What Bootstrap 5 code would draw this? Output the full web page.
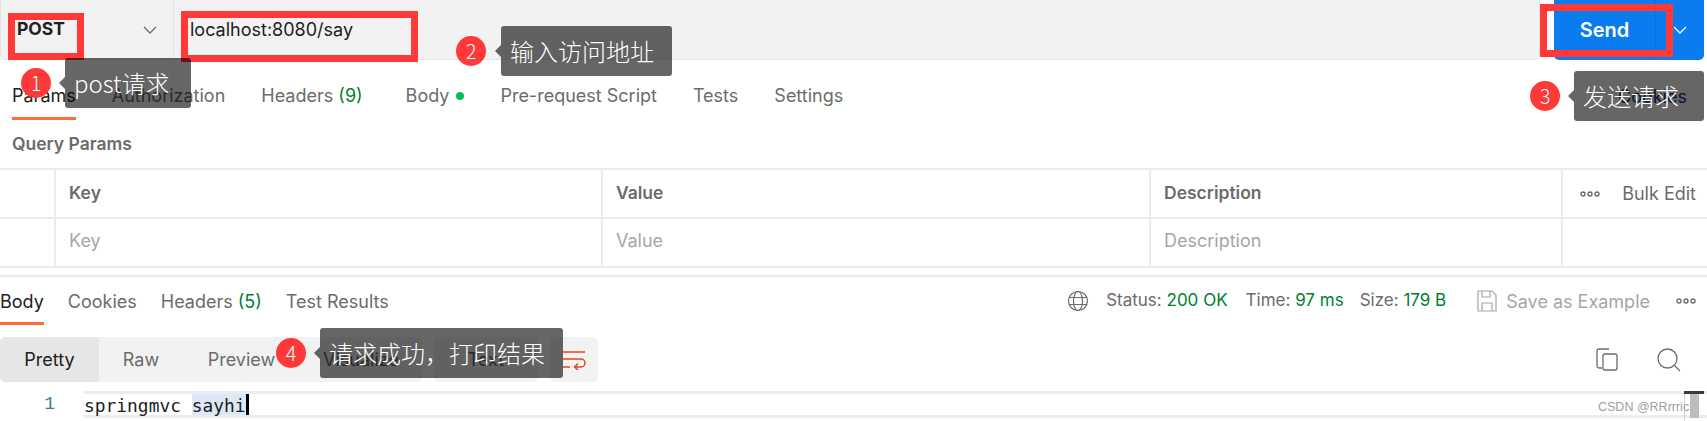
<!DOCTYPE html>
<html lang="zh">
<head>
    <meta charset="UTF-8">
    <title>Postman</title>
    <link href="https://cdn.jsdelivr.net/npm/bootstrap@5.3.2/dist/css/bootstrap.min.css" rel="stylesheet">
    <style>
        html, body { height: 421px; overflow: hidden; }
        body {
            background: #fff;
            font-family: Inter, "Noto Sans CJK SC", sans-serif;
            font-size: 18px;
            color: #6b6b6b;
            position: relative;
        }
        .url-bar { height: 60px; }
        .url-box { width: 1540px; background: #f2f2f2; border: 1px solid #e6e6e6; border-top: 0; border-radius: 0 0 5px 5px; }
        .method-box { width: 173px; border-right: 1px solid #e6e6e6; padding-left: 16px; padding-right: 15px; font-weight: 700; font-size: 17.500px; color: #212121; }
        .url-text { padding-left: 16px; font-size: 18px; color: #212121; }
        .send-group { width: 150px; margin-left: 14px; background: #0a7cf0; border-radius: 0 0 5px 5px; color: #fff; }
        .send-main { width: 102px; border-right: 1px solid #0a6fd8; font-size: 20px; font-weight: 600; }
        .send-arrow { width: 48px; }
        .tab-row { height: 60px; padding-left: 12px; gap: 36px; }
        .tab-item { height: 100%; display: flex; align-items: center; border-bottom: 3px solid transparent; padding-top: 3px; }
        .tab-row .tab-item { padding-top: 14px; }
        .tab-item.on { color: #212121; border-bottom-color: #ff6c37; }
        .tab-body { margin-left: 7px; }
        .num { color: #007f31; }
        .body-dot { width: 8px; height: 8px; border-radius: 50%; background: #0cbb52; margin-left: 7px; }
        .query-title { height: 48px; padding-left: 12px; font-size: 17.500px; font-weight: 600; }
        .param-table { table-layout: fixed; width: 1707px; margin: 0; color: inherit; border-top: 2px solid #ececec; }
        .param-table td, .param-table th { padding: 0 13px; vertical-align: middle; border-bottom: 2px solid #ececec; border-right: 2px solid #ececec; box-shadow: none; background: transparent; color: inherit; font-weight: 600; font-size: 17.500px; }
        .param-table th { height: 49px; }
        .param-table td { height: 49px; padding-bottom: 5px; color: #a6a6a6; font-weight: 400; font-size: 18px; }
        .param-table tr > :last-child { border-right: 0; }
        .param-table .bulk-cell { font-weight: 400; font-size: 18px; color: #6b6b6b; padding-left: 17px; padding-right: 11px; white-space: nowrap; }
        .col-gutter { width: 55px; }
        .col-key { width: 547px; }
        .col-val { width: 548px; }
        .col-desc { width: 412px; }
        .res-rule { border-top: 2px solid #ececec; margin-top: 7px; }
        .res-bar { height: 48px; gap: 25px; }
        .res-tabs { gap: 24px; height: 100%; }
        .res-meta { gap: 16px; padding-right: 11px; font-size: 17px; }
        .res-globe { margin-right: 1px; }
        .res-status { margin-right: 2px; }
        .res-save { color: #a6a6a6; margin-left: 14px; margin-right: 10px; font-size: 18px; }
        .view-row { height: 45px; margin-top: 12px; gap: 12px; }
        .view-group { background: #f2f2f2; border-radius: 5px; overflow: hidden; }
        .view-btn { height: 100%; display: flex; align-items: center; justify-content: center; }
        .view-btn.on { background: #e6e6e6; color: #212121; }
        .w-pretty { width: 99px; }
        .w-raw { width: 84px; }
        .w-preview { width: 117px; }
        .w-vis { width: 122px; }
        .w-text { width: 104px; }
        .w-wrap { width: 48px; }
        .view-tools { margin-left: auto; gap: 39px; padding-right: 26px; }
        .code-row { height: 27px; margin-top: 9px; }
        .line-no { width: 84px; padding-right: 29px; text-align: right; color: #3a7d9c; font-family: "Liberation Mono", monospace; font-size: 18px; }
        .code-line { flex-grow: 1; border-top: 3px solid #ededed; border-bottom: 3px solid #ededed; font-family: "DejaVu Sans Mono", monospace; font-size: 17.900px; line-height: 23px; height: 27px; color: #212121; }
        .code-sel { background: #dbe8f5; border-right: 3px solid #000; display: inline-block; height: 21px; vertical-align: top; }
        .mark-box { position: absolute; border: 7px solid #ff3838; }
        .box-method { left: 8px; top: 13px; width: 76px; height: 47px; }
        .box-url { left: 181px; top: 11px; width: 237px; height: 51px; }
        .box-send { left: 1540px; top: 4px; width: 133px; height: 53px; }
        .step-dot { position: absolute; width: 30px; height: 30px; border-radius: 50%; background: #ff3838; color: #fff; font-size: 20px; font-weight: 300; display: flex; align-items: center; justify-content: center; font-family: "Noto Sans CJK SC", sans-serif; }
        .step-tip { position: absolute; height: 50px; background: rgba(0, 0, 0, .6); border-radius: 3px; color: #fff; font-size: 24px; font-weight: 300; padding-left: 9px; display: flex; align-items: center; white-space: nowrap; font-family: "Noto Sans CJK SC", sans-serif; }
        .step-tip::before { content: ""; position: absolute; left: -6px; top: 19px; border-style: solid; border-width: 6px 6px 6px 0; border-color: transparent rgba(0, 0, 0, .6) transparent transparent; }
        .dot-1 { left: 21px; top: 68px; }
        .tip-1 { left: 65px; top: 58px; width: 126px; }
        .dot-2 { left: 456px; top: 36px; }
        .tip-2 { left: 501px; top: 26px; width: 171px; }
        .dot-3 { left: 1530px; top: 81px; }
        .tip-3 { left: 1574px; top: 71px; width: 130px; }
        .dot-4 { left: 276px; top: 338px; }
        .tip-4 { left: 320px; top: 328px; width: 243px; }
        .hidden-tab { position: absolute; left: 1618px; top: 83px; color: #0f3a78; }
        .water-mark { position: absolute; left: 1598px; top: 398px; font-family: "Liberation Sans", sans-serif; font-size: 12.500px; color: #a0a0a0; white-space: nowrap; }
        .cursor-beam { position: absolute; left: 1684px; top: 391px; width: 20px; height: 3px; background: #3a3a3a; }
        .cursor-stem { position: absolute; left: 1690px; top: 394px; width: 9px; height: 24px; background: #bdbdbd; }
        .cursor-line { position: absolute; left: 1684px; top: 394px; width: 1px; height: 27px; background: #d0d0d0; }
    </style>
</head>
<body>
    <div class="url-bar d-flex">
        <div class="url-box d-flex align-items-center">
            <div class="method-box h-100 d-flex align-items-center justify-content-between">
                <span>POST</span>
                <svg width="16" height="16" viewBox="0 0 16 16" fill="none" stroke="#6b6b6b" stroke-width="1.300"><path d="M2 5l6 6 6-6"/></svg>
            </div>
            <div class="url-text">localhost:8080/say</div>
        </div>
        <div class="send-group d-flex">
            <div class="send-main d-flex align-items-center justify-content-center">Send</div>
            <div class="send-arrow d-flex align-items-center justify-content-center">
                <svg width="14" height="14" viewBox="0 0 14 14" fill="none" stroke="#fff" stroke-width="1.300"><path d="M1 4l6 6 6-6"/></svg>
            </div>
        </div>
    </div>

    <div class="tab-row d-flex">
        <div class="tab-item on">Params</div>
        <div class="tab-item">Authorization</div>
        <div class="tab-item">Headers&nbsp;<span class="num">(9)</span></div>
        <div class="tab-item tab-body">Body<span class="body-dot"></span></div>
        <div class="tab-item">Pre-request Script</div>
        <div class="tab-item">Tests</div>
        <div class="tab-item">Settings</div>
    </div>

    <div class="query-title d-flex align-items-center">Query Params</div>
    <table class="table param-table">
        <colgroup><col class="col-gutter"><col class="col-key"><col class="col-val"><col class="col-desc"><col></colgroup>
        <tr>
            <th></th><th>Key</th><th>Value</th><th>Description</th>
            <th class="bulk-cell">
                <div class="d-flex align-items-center justify-content-between">
                    <svg width="20" height="6" viewBox="0 0 20 6" fill="none" stroke="#6b6b6b" stroke-width="1.400"><circle cx="3" cy="3" r="2"/><circle cx="10" cy="3" r="2"/><circle cx="17" cy="3" r="2"/></svg>
                    <span>Bulk Edit</span>
                </div>
            </th>
        </tr>
        <tr><td></td><td>Key</td><td>Value</td><td>Description</td><td></td></tr>
    </table>
    <div class="res-rule"></div>

    <div class="res-bar d-flex justify-content-between">
        <div class="res-tabs d-flex">
            <div class="tab-item on">Body</div>
            <div class="tab-item">Cookies</div>
            <div class="tab-item">Headers&nbsp;<span class="num">(5)</span></div>
            <div class="tab-item">Test Results</div>
        </div>
        <div class="res-meta d-flex align-items-center">
            <svg class="res-globe" width="22" height="22" viewBox="0 0 22 22" fill="none" stroke="#6b6b6b" stroke-width="1.200"><circle cx="11" cy="11" r="9.500"/><ellipse cx="11" cy="11" rx="4.500" ry="9.500"/><path d="M2 7.500h18M2 14.500h18"/></svg>
            <span class="res-status">Status: <span class="num">200 OK</span></span>
            <span>Time: <span class="num">97 ms</span></span>
            <span>Size: <span class="num">179 B</span></span>
            <span class="res-save d-flex align-items-center gap-2">
                <svg width="22" height="22" viewBox="0 0 22 22" fill="none" stroke="#a6a6a6" stroke-width="1.200"><path d="M2 1h14l4 4v16H2zM6 1v6h8V1M6 21v-8h10v8"/></svg>
                Save as Example
            </span>
            <svg width="20" height="6" viewBox="0 0 20 6" fill="none" stroke="#6b6b6b" stroke-width="1.400"><circle cx="3" cy="3" r="2"/><circle cx="10" cy="3" r="2"/><circle cx="17" cy="3" r="2"/></svg>
        </div>
    </div>

    <div class="view-row d-flex">
        <div class="view-group d-flex">
            <div class="view-btn w-pretty on">Pretty</div>
            <div class="view-btn w-raw">Raw</div>
            <div class="view-btn w-preview">Preview</div>
            <div class="view-btn w-vis">Visualize</div>
        </div>
        <div class="view-group d-flex">
            <div class="view-btn w-text">Text</div>
        </div>
        <div class="view-group d-flex">
            <div class="view-btn w-wrap">
                <svg width="24" height="20" viewBox="0 0 24 20" fill="none" stroke="#e0481f" stroke-width="1.500"><path d="M1 2h22M1 9h18a3.500 3.500 0 0 1 0 8h-6M16 13.500l-3.500 3.500 3.500 3M1 17h7"/></svg>
            </div>
        </div>
        <div class="view-tools d-flex align-items-center">
            <svg width="22" height="23" viewBox="0 0 22 23" fill="none" stroke="#6b6b6b" stroke-width="1.300"><path d="M6 20H3a2 2 0 0 1-2-2V3a2 2 0 0 1 2-2h10"/><rect x="7" y="6" width="14" height="16" rx="2"/></svg>
            <svg width="24" height="24" viewBox="0 0 24 24" fill="none" stroke="#6b6b6b" stroke-width="1.300"><circle cx="10.500" cy="10.500" r="9.500"/><path d="M17.500 17.500L23 23"/></svg>
        </div>
    </div>

    <div class="code-row d-flex">
        <div class="line-no">1</div>
        <div class="code-line">springmvc <span class="code-sel">sayhi</span></div>
    </div>

    <div class="hidden-tab">Cookies</div>
    <div class="cursor-beam"></div>
    <div class="cursor-stem"></div>
    <div class="cursor-line"></div>
    <div class="water-mark">CSDN @RRrrric.</div>

    <div class="mark-box box-method"></div>
    <div class="mark-box box-url"></div>
    <div class="mark-box box-send"></div>

    <div class="step-dot dot-1">1</div>
    <div class="step-tip tip-1">post请求</div>
    <div class="step-dot dot-2">2</div>
    <div class="step-tip tip-2">输入访问地址</div>
    <div class="step-dot dot-3">3</div>
    <div class="step-tip tip-3">发送请求</div>
    <div class="step-dot dot-4">4</div>
    <div class="step-tip tip-4">请求成功，打印结果</div>

    <script src="https://cdn.jsdelivr.net/npm/bootstrap@5.3.2/dist/js/bootstrap.bundle.min.js"></script>
</body>
</html>
